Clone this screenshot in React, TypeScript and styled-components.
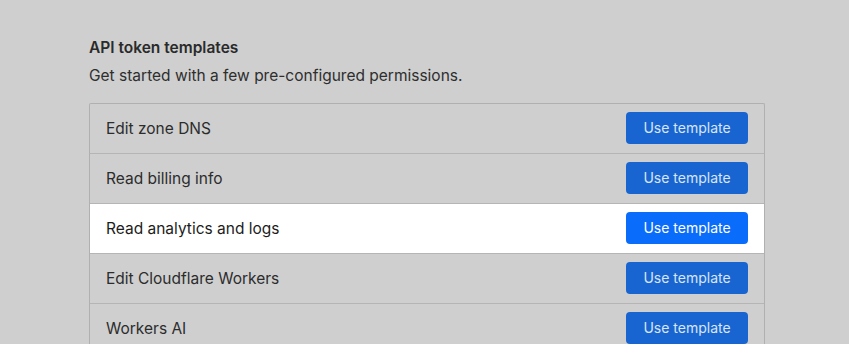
import React from "react";
import styled, { createGlobalStyle } from "styled-components";

const Global = createGlobalStyle`
  html, body { margin: 0; padding: 0; background: #cfcfcf; }
  body { font-family: Inter, "Noto Sans", sans-serif; -webkit-font-smoothing: antialiased; }
`;

const Page = styled.div`
  padding: 37px 84px 0 89px;
  height: 344px;
  box-sizing: border-box;
  overflow: hidden;
`;

const Title = styled.h2`
  margin: 0;
  font-size: 15.5px;
  font-weight: 600;
  color: #2a2a2a;
  line-height: 22px;
`;

const Subtitle = styled.p`
  margin: 6px 0 0;
  font-size: 15.5px;
  color: #2e2e2e;
  line-height: 22px;
`;

const Table = styled.div`
  margin-top: 16px;
  width: 676px;
  box-sizing: border-box;
  border: 1px solid #b0b0b0;
  border-bottom: none;
  border-radius: 2px 2px 0 0;
  display: flex;
  flex-direction: column;
`;

const Row = styled.div<{ $active?: boolean }>`
  display: flex;
  align-items: center;
  justify-content: space-between;
  height: 49px;
  padding: 0 16px 0 16px;
  background: ${(p) => (p.$active ? "#ffffff" : "transparent")};
  border-bottom: 1px solid #b5b5b5;
`;

const Label = styled.span<{ $active?: boolean }>`
  font-size: 15.5px;
  color: ${(p) => (p.$active ? "#1c1c1c" : "#2c2c2c")};
`;

const Button = styled.button<{ $active?: boolean }>`
  width: 122px;
  height: 32px;
  margin-bottom: 2px;
  border: none;
  border-radius: 4px;
  font-family: inherit;
  font-size: 14px;
  font-weight: 400;
  background: ${(p) => (p.$active ? "#0a6cfa" : "#1865d2")};
  color: ${(p) => (p.$active ? "#ffffff" : "#dbe5f4")};
  cursor: pointer;
`;

const items = [
  "Edit zone DNS",
  "Read billing info",
  "Read analytics and logs",
  "Edit Cloudflare Workers",
  "Workers AI",
];

export default function App() {
  return (
    <>
      <Global />
      <Page>
        <Title>API token templates</Title>
        <Subtitle>Get started with a few pre-configured permissions.</Subtitle>
        <Table>
          {items.map((t, i) => (
            <Row key={t} $active={i === 2}>
              <Label $active={i === 2}>{t}</Label>
              <Button $active={i === 2}>Use template</Button>
            </Row>
          ))}
        </Table>
      </Page>
    </>
  );
}
